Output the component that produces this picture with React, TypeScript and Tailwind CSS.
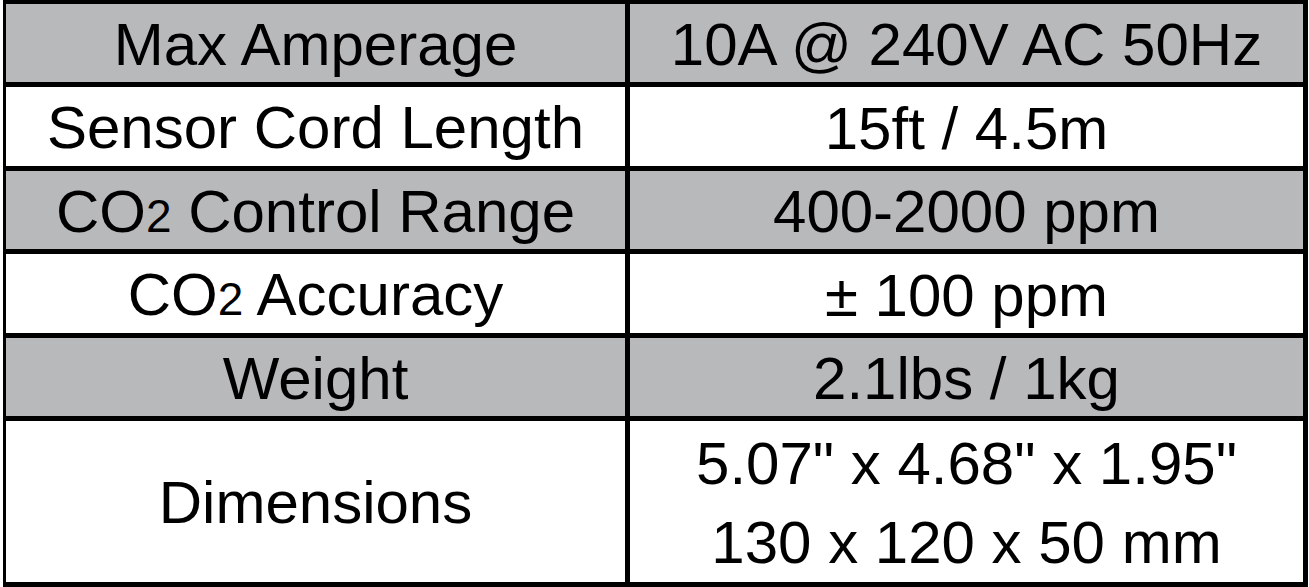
const rows: { label: React.ReactNode; value: React.ReactNode; gray: boolean }[] = [
  { label: "Max Amperage", value: "10A @ 240V AC 50Hz", gray: true },
  { label: "Sensor Cord Length", value: "15ft / 4.5m", gray: false },
  {
    label: (
      <>
        CO<span className="text-[46px]">2</span> Control Range
      </>
    ),
    value: "400-2000 ppm",
    gray: true,
  },
  {
    label: (
      <>
        CO<span className="text-[46px]">2</span> Accuracy
      </>
    ),
    value: "± 100 ppm",
    gray: false,
  },
  { label: "Weight", value: "2.1lbs / 1kg", gray: true },
  {
    label: "Dimensions",
    value: (
      <>
        <div>5.07" x 4.68" x 1.95"</div>
        <div>130 x 120 x 50 mm</div>
      </>
    ),
    gray: false,
  },
];

export default function App() {
  return (
    <div className="w-[1309px] h-[587px] bg-white pl-[3px] overflow-hidden">
      <div
        className="grid w-[1305px] grid-cols-[619px_673px] grid-rows-[78px_79px_78px_79px_78px_161px] gap-[5px] bg-black pt-[4px] pl-[3px] pr-[5px] pb-[5px] text-[60px] text-black"
        style={{ fontFamily: '"Liberation Sans", Arial, sans-serif' }}
      >
        {rows.map((row, i) => (
          <Row key={i} label={row.label} value={row.value} gray={row.gray} />
        ))}
      </div>
    </div>
  );
}

function Row({
  label,
  value,
  gray,
}: {
  label: React.ReactNode;
  value: React.ReactNode;
  gray: boolean;
}) {
  const bg = gray ? "bg-[#b8b9bb]" : "bg-white";
  return (
    <>
      <div className={`${bg} flex items-center justify-center pt-[3px] leading-none whitespace-nowrap`}>
        <span>{label}</span>
      </div>
      <div className={`${bg} flex flex-col items-center justify-center pt-[3px] leading-[79px] whitespace-nowrap`}>
        {value}
      </div>
    </>
  );
}
